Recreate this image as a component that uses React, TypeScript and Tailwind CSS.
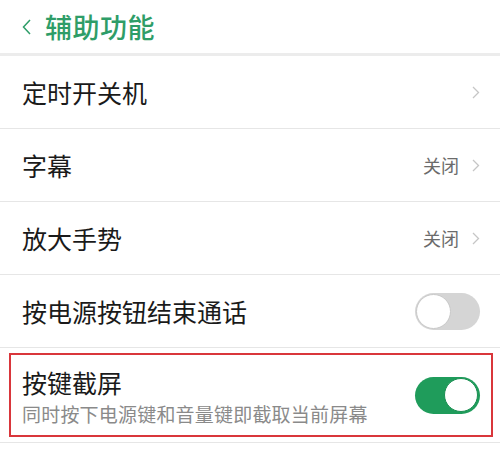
import React from "react";

const font = { fontFamily: '"Noto Sans CJK SC", "Noto Sans", sans-serif' };

function Chevron() {
  return (
    <svg width="8" height="13" viewBox="0 0 8 13" fill="none" className="shrink-0">
      <path d="M1 1 L6.5 6.5 L1 12" stroke="#c6c6c6" strokeWidth="1.3" />
    </svg>
  );
}

function Toggle({ on }: { on: boolean }) {
  return on ? (
    <div className="w-[65px] h-[37px] rounded-full bg-[#1f9c5b] flex items-center justify-end pr-[2px] shrink-0">
      <div className="w-[34px] h-[34px] rounded-full bg-white border border-[#1a8f52]" />
    </div>
  ) : (
    <div className="w-[65px] h-[37px] rounded-full bg-[#d5d5d5] flex items-center justify-start pl-[1px] shrink-0">
      <div className="w-[35px] h-[35px] rounded-full bg-white border border-[#c9c9c9]" />
    </div>
  );
}

function Row({ title, value, chevron, toggle }: { title: string; value?: string; chevron?: boolean; toggle?: boolean }) {
  return (
    <div className="h-[73px] border-b border-[#e6e6e6] flex items-center pl-[22px] pr-[20px]">
      <div className="flex-1 text-[25px] text-[#1a1a1a] leading-none">{title}</div>
      {value && <div className="text-[18px] text-[#6b6b6b] leading-none mr-[13px]">{value}</div>}
      {chevron && <Chevron />}
      {toggle !== undefined && <Toggle on={toggle} />}
    </div>
  );
}

export default function App() {
  return (
    <div className="w-[500px] h-[459px] bg-white overflow-hidden" style={font}>
      <div className="h-[53px] flex items-center pl-[22px]">
        <svg width="9" height="16" viewBox="0 0 9 16" fill="none" className="mr-[14px]">
          <path d="M8 1 L1.5 8 L8 15" stroke="#2e9d68" strokeWidth="1.5" />
        </svg>
        <div className="text-[27px] font-medium text-[#2e9d68] leading-none tracking-[0.5px]">辅助功能</div>
      </div>
      <div className="h-[3px] bg-[#ececec]" />
      <Row title="定时开关机" chevron />
      <Row title="字幕" value="关闭" chevron />
      <Row title="放大手势" value="关闭" chevron />
      <Row title="按电源按钮结束通话" toggle={false} />
      <div className="relative h-[95px] border-b border-[#e6e6e6] flex items-center pl-[22px] pr-[20px]">
        <div className="flex-1 flex flex-col pt-[3px]">
          <div className="text-[25px] text-[#1a1a1a] leading-none">按键截屏</div>
          <div className="text-[19px] text-[#8a8a8a] leading-none mt-[9px] tracking-[0.2px]">同时按下电源键和音量键即截取当前屏幕</div>
        </div>
        <Toggle on />
        <div className="absolute left-[9px] right-[7px] top-[5px] bottom-[5px] border-2 border-[#d9363b] pointer-events-none" />
      </div>
    </div>
  );
}
